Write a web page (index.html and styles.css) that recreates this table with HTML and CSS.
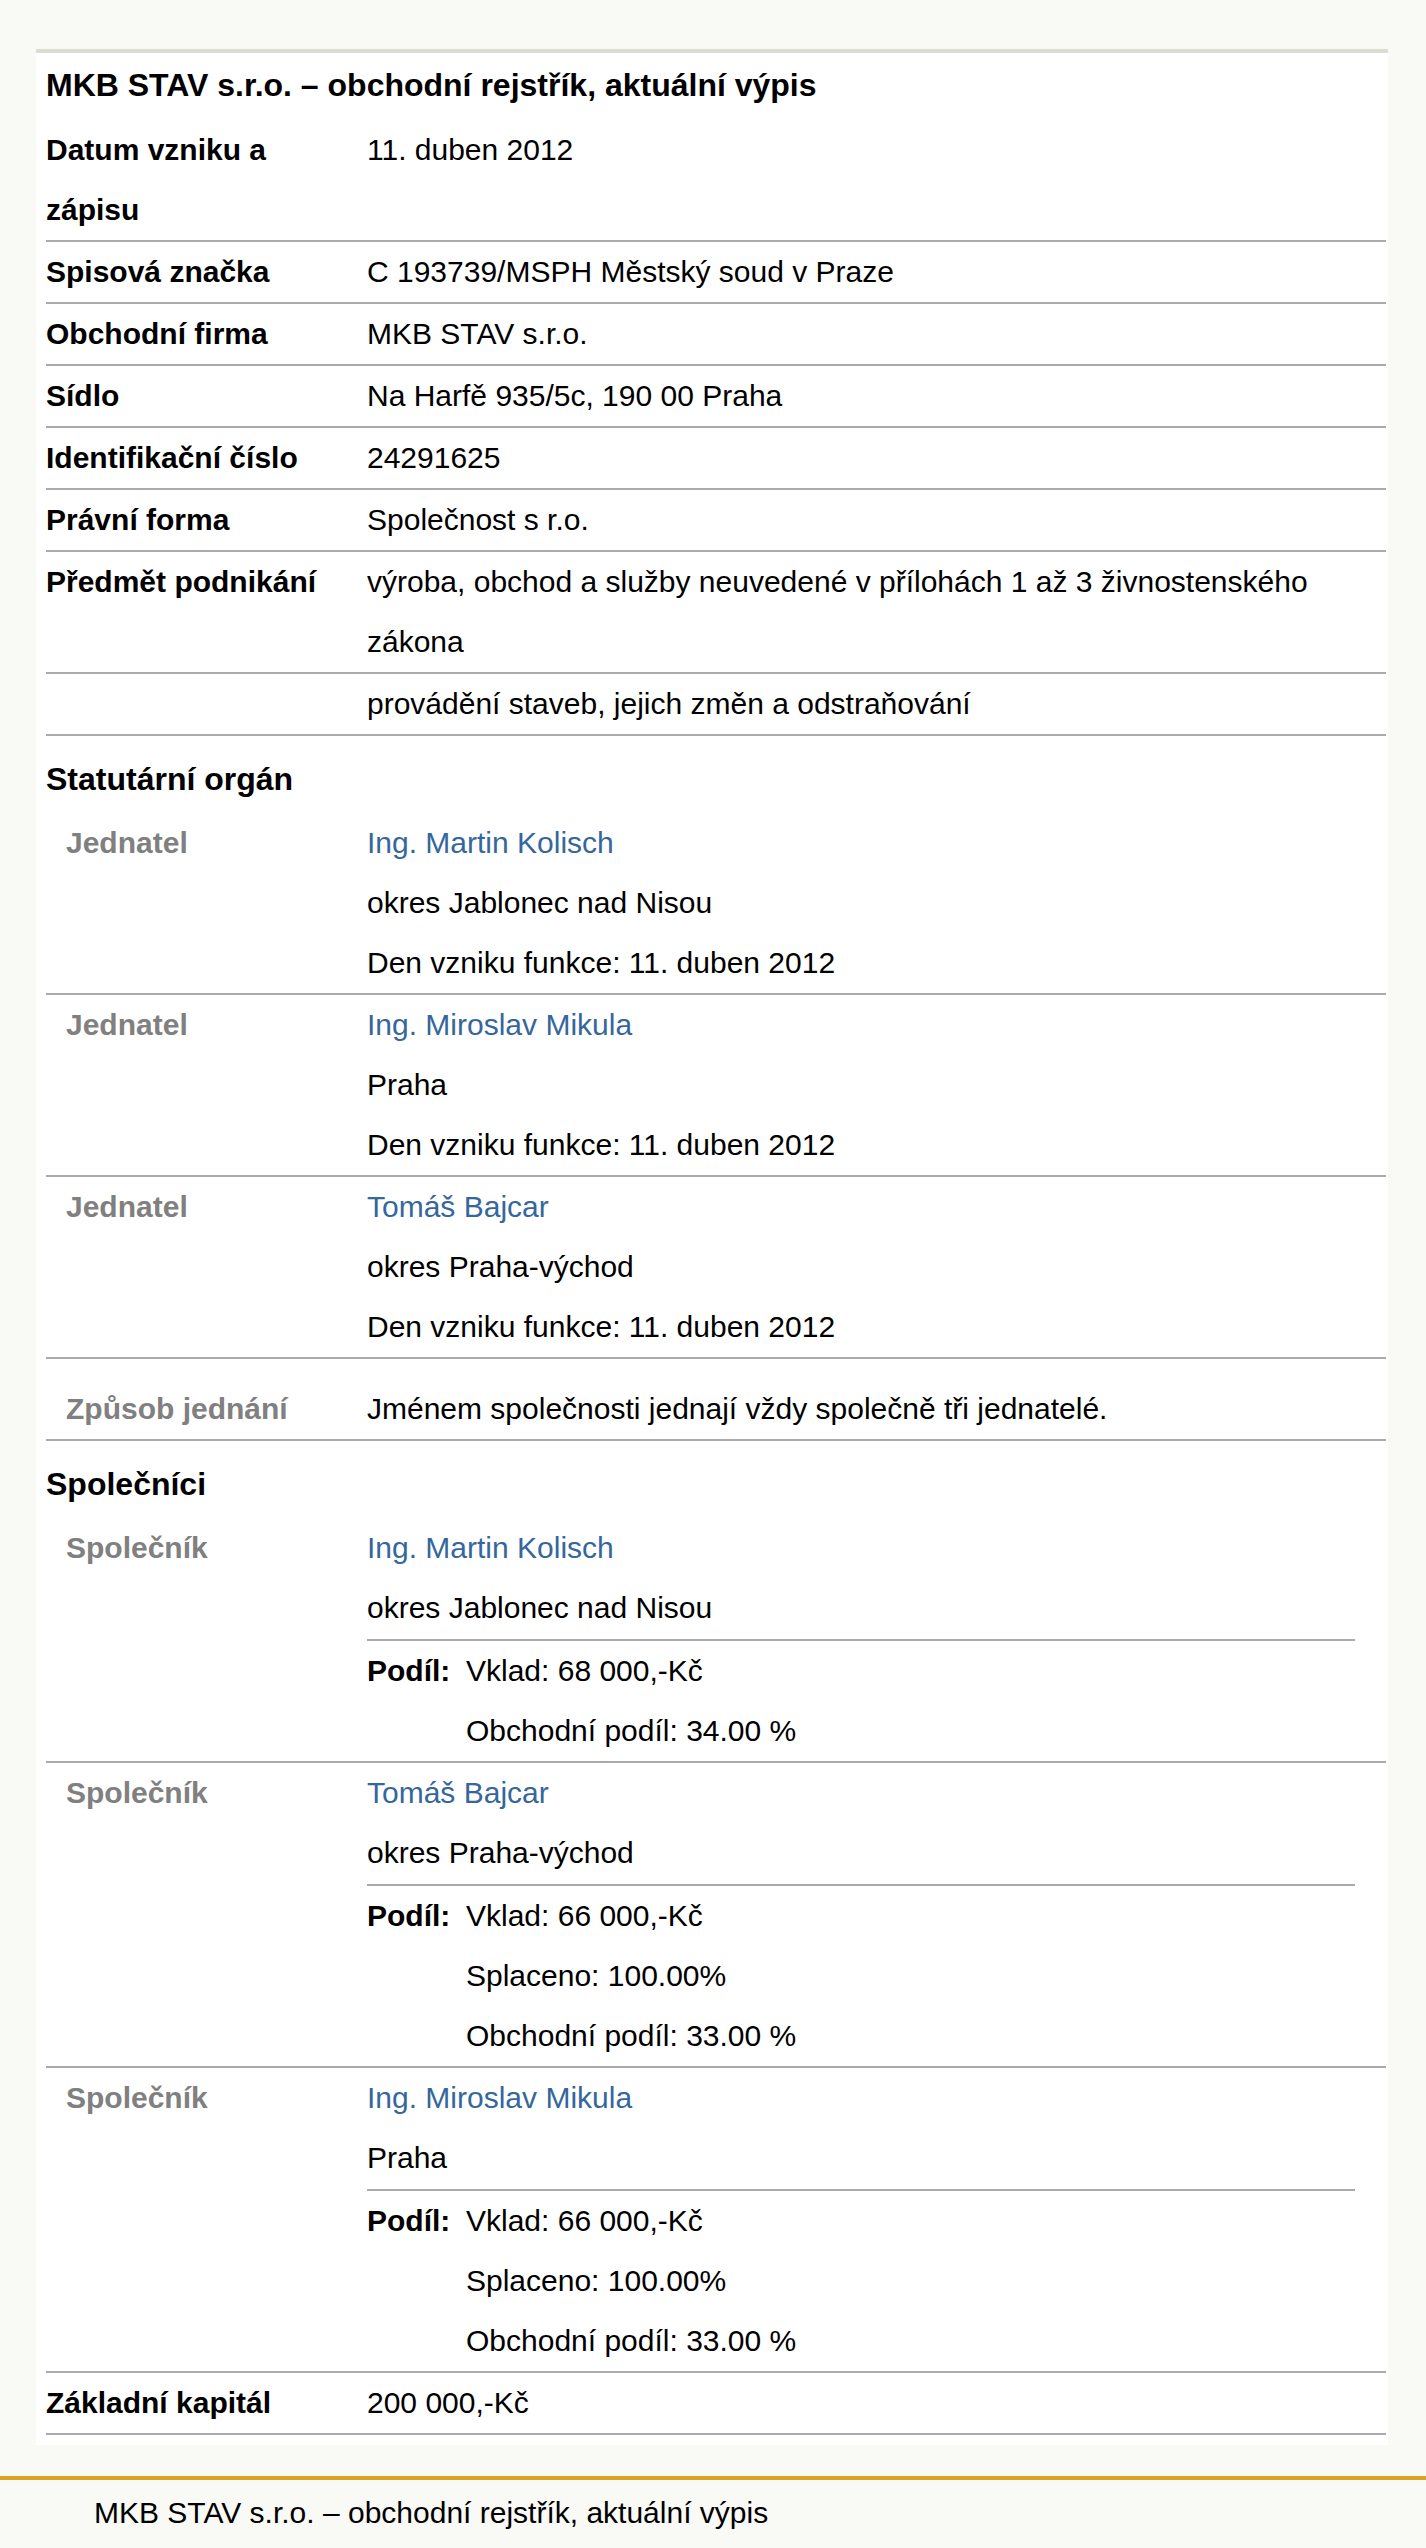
FILE: index.html
```html
<!DOCTYPE html>
<html lang="cs">
<head>
<meta charset="utf-8">
<title>MKB STAV s.r.o. – obchodní rejstřík, aktuální výpis</title>
<link rel="stylesheet" href="styles.css">
</head>
<body>
<div class="card">
  <div class="title">MKB STAV s.r.o. – obchodní rejstřík, aktuální výpis</div>

  <div class="row"><div class="lbl">Datum vzniku a zápisu</div><div class="val">11. duben 2012</div></div>
  <div class="row"><div class="lbl">Spisová značka</div><div class="val">C 193739/MSPH Městský soud v Praze</div></div>
  <div class="row"><div class="lbl">Obchodní firma</div><div class="val">MKB STAV s.r.o.</div></div>
  <div class="row"><div class="lbl">Sídlo</div><div class="val">Na Harfě 935/5c, 190 00 Praha</div></div>
  <div class="row"><div class="lbl">Identifikační číslo</div><div class="val">24291625</div></div>
  <div class="row"><div class="lbl">Právní forma</div><div class="val">Společnost s r.o.</div></div>
  <div class="row"><div class="lbl">Předmět podnikání</div><div class="val">výroba, obchod a služby neuvedené v přílohách 1 až 3 živnostenského zákona</div></div>
  <div class="row"><div class="lbl"></div><div class="val">provádění staveb, jejich změn a odstraňování</div></div>

  <div class="section">Statutární orgán</div>

  <div class="row">
    <div class="lbl sub">Jednatel</div>
    <div class="val">
      <div class="name">Ing. Martin Kolisch</div>
      <div>okres Jablonec nad Nisou</div>
      <div>Den vzniku funkce: 11. duben 2012</div>
    </div>
  </div>
  <div class="row">
    <div class="lbl sub">Jednatel</div>
    <div class="val">
      <div class="name">Ing. Miroslav Mikula</div>
      <div>Praha</div>
      <div>Den vzniku funkce: 11. duben 2012</div>
    </div>
  </div>
  <div class="row">
    <div class="lbl sub">Jednatel</div>
    <div class="val">
      <div class="name">Tomáš Bajcar</div>
      <div>okres Praha-východ</div>
      <div>Den vzniku funkce: 11. duben 2012</div>
    </div>
  </div>
  <div class="row spaced">
    <div class="lbl sub">Způsob jednání</div>
    <div class="val">Jménem společnosti jednají vždy společně tři jednatelé.</div>
  </div>

  <div class="section">Společníci</div>

  <div class="row">
    <div class="lbl sub">Společník</div>
    <div class="val">
      <div class="name">Ing. Martin Kolisch</div>
      <div>okres Jablonec nad Nisou</div>
      <div class="podil">
        <div class="podil-lbl">Podíl:</div>
        <div>
          <div>Vklad: 68 000,-Kč</div>
          <div>Obchodní podíl: 34.00 %</div>
        </div>
      </div>
    </div>
  </div>
  <div class="row">
    <div class="lbl sub">Společník</div>
    <div class="val">
      <div class="name">Tomáš Bajcar</div>
      <div>okres Praha-východ</div>
      <div class="podil">
        <div class="podil-lbl">Podíl:</div>
        <div>
          <div>Vklad: 66 000,-Kč</div>
          <div>Splaceno: 100.00%</div>
          <div>Obchodní podíl: 33.00 %</div>
        </div>
      </div>
    </div>
  </div>
  <div class="row">
    <div class="lbl sub">Společník</div>
    <div class="val">
      <div class="name">Ing. Miroslav Mikula</div>
      <div>Praha</div>
      <div class="podil">
        <div class="podil-lbl">Podíl:</div>
        <div>
          <div>Vklad: 66 000,-Kč</div>
          <div>Splaceno: 100.00%</div>
          <div>Obchodní podíl: 33.00 %</div>
        </div>
      </div>
    </div>
  </div>

  <div class="row"><div class="lbl">Základní kapitál</div><div class="val">200 000,-Kč</div></div>
</div>

<footer class="footer">
  <div class="footer-text">MKB STAV s.r.o. – obchodní rejstřík, aktuální výpis</div>
</footer>
</body>
</html>
```

FILE: styles.css
```css
html, body {
  margin: 0;
  padding: 0;
}

body {
  background: #f9f9f5;
  font-family: "Liberation Sans", Arial, sans-serif;
  font-size: 30px;
  line-height: 60px;
  color: #000;
}

.card {
  box-sizing: border-box;
  width: 1352px;
  margin: 49px 0 0 36px;
  padding: 0 2px 10px 10px;
  background: #fff;
  border-top: 4px solid #dcdcd3;
}

.title {
  font-size: 32px;
  font-weight: bold;
  padding: 2px 0 5px;
}

.section {
  font-size: 32px;
  font-weight: bold;
  padding: 13px 0 4px;
}

.row {
  display: grid;
  grid-template-columns: 321px 1fr;
  border-bottom: 2px solid #aaaaaa;
}

.row.spaced {
  padding-top: 20px;
}

.lbl {
  font-weight: bold;
  padding-right: 21px;
}

.lbl.sub {
  color: #808080;
  padding-left: 20px;
}

.name {
  color: #35679c;
}

.podil {
  display: grid;
  grid-template-columns: 99px 1fr;
  margin: 1px 31px 0 0;
  border-top: 2px solid #aaaaaa;
}

.podil-lbl {
  font-weight: bold;
}

.footer {
  margin-top: 31px;
  border-top: 4px solid #d9a426;
  padding: 3px 0 0 94px;
}
```
